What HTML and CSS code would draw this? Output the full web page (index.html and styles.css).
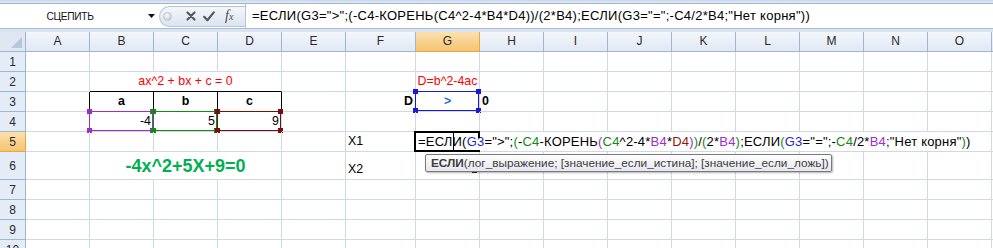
FILE: index.html
```html
<!DOCTYPE html>
<html lang="ru">
<head>
<meta charset="utf-8">
<title>Excel</title>
<link rel="stylesheet" href="styles.css">
</head>
<body>
<div class="app">
  <div class="ribbon-edge"></div>
  <div class="fbar">
    <div class="namebox">
      <span class="name">СЦЕПИТЬ</span>
      <svg class="dd" width="7" height="4" viewBox="0 0 7 4"><path d="M0 0H7L3.5 4Z" fill="#111"/></svg>
    </div>
    <div class="pill">
      <span class="knob"></span>
      <svg class="ico" width="10" height="10" viewBox="0 0 10 10"><path d="M1.5 1.5L8.5 8.5M8.5 1.5L1.5 8.5" stroke="#5a5a5a" stroke-width="2.2" stroke-linecap="round"/></svg>
      <svg class="ico" width="12" height="11" viewBox="0 0 12 11"><path d="M1.2 5.8L4.4 9.3L10.8 1.4" stroke="#5a5a5a" stroke-width="2.2" fill="none" stroke-linecap="round" stroke-linejoin="round"/></svg>
      <span class="fx">f<small>x</small></span>
    </div>
    <div class="formula">=ЕСЛИ(G3="&gt;";(-C4-КОРЕНЬ(C4^2-4*B4*D4))/(2*B4);ЕСЛИ(G3="=";-C4/2*B4;"Нет корня"))</div>
  </div>
  <div class="gap"></div>

  <div class="sheet">
    <!-- header row -->
    <div class="corner"></div>
    <div class="ch">A</div><div class="ch">B</div><div class="ch">C</div><div class="ch">D</div><div class="ch">E</div><div class="ch">F</div><div class="ch sel">G</div><div class="ch">H</div><div class="ch">I</div><div class="ch">J</div><div class="ch">K</div><div class="ch">L</div><div class="ch">M</div><div class="ch">N</div><div class="ch">O</div><div class="ch"></div>

    <!-- row 1 -->
    <div class="rh">1</div>
    <div class="c"></div><div class="c"></div><div class="c"></div><div class="c"></div><div class="c"></div><div class="c"></div><div class="c"></div><div class="c"></div><div class="c"></div><div class="c"></div><div class="c"></div><div class="c"></div><div class="c"></div><div class="c"></div><div class="c"></div><div class="c"></div>

    <!-- row 2 -->
    <div class="rh">2</div>
    <div class="c"></div>
    <div class="c span3 center red bb-black">ax^2 + bx + c = 0</div>
    <div class="c"></div><div class="c"></div>
    <div class="c center red">D=b^2-4ac</div>
    <div class="c"></div><div class="c"></div><div class="c"></div><div class="c"></div><div class="c"></div><div class="c"></div><div class="c"></div><div class="c"></div><div class="c"></div>

    <!-- row 3 -->
    <div class="rh">3</div>
    <div class="c br-black"></div>
    <div class="c center bold br-black">a</div>
    <div class="c center bold br-black">b</div>
    <div class="c center bold br-black">c</div>
    <div class="c"></div>
    <div class="c right bold">D</div>
    <div class="c center bold blue">&gt;<span class="ref ref-blue"><i class="k tl"></i><i class="k tr"></i><i class="k bl"></i><i class="k br"></i></span></div>
    <div class="c bold">0</div>
    <div class="c"></div><div class="c"></div><div class="c"></div><div class="c"></div><div class="c"></div><div class="c"></div><div class="c"></div><div class="c"></div>

    <!-- row 4 -->
    <div class="rh">4</div>
    <div class="c"></div>
    <div class="c right">-4<span class="ref ref-purple"><i class="k tl"></i><i class="k tr"></i><i class="k bl"></i><i class="k br"></i></span></div>
    <div class="c right">5<span class="ref ref-green"><i class="k tl"></i><i class="k tr"></i><i class="k bl"></i><i class="k br"></i></span></div>
    <div class="c right">9<span class="ref ref-red"><i class="k tl"></i><i class="k tr"></i><i class="k bl"></i><i class="k br"></i></span></div>
    <div class="c"></div><div class="c"></div><div class="c"></div><div class="c"></div><div class="c"></div><div class="c"></div><div class="c"></div><div class="c"></div><div class="c"></div><div class="c"></div><div class="c"></div><div class="c"></div>

    <!-- row 5 -->
    <div class="rh sel">5</div>
    <div class="c"></div><div class="c"></div><div class="c"></div><div class="c"></div><div class="c"></div>
    <div class="c">X1</div>
    <div class="c active">
      <div class="edit">=ЕСЛ<span class="caret"></span>И(<span class="rb">G3</span>="&gt;";<span class="rg">(</span>-<span class="rg">C4</span>-КОРЕНЬ<span class="rp">(</span><span class="rg">C4</span>^2-4*<span class="rp">B4</span>*<span class="rr">D4</span><span class="rp">)</span><span class="rg">)</span>/<span class="rg">(</span>2*<span class="rp">B4</span><span class="rg">)</span>;ЕСЛИ<span class="rg">(</span><span class="rb">G3</span>="=";-<span class="rg">C4</span>/2*<span class="rp">B4</span>;"Нет корня"<span class="rg">)</span>)</div>
      <span class="active-box"></span>
      <span class="active-tick"></span>
      <div class="tip"><b>ЕСЛИ</b>(лог_выражение; [значение_если_истина]; [значение_если_ложь])</div>
      <span class="dash"></span>
    </div>
    <div class="c"></div><div class="c"></div><div class="c"></div><div class="c"></div><div class="c"></div><div class="c"></div><div class="c"></div><div class="c"></div><div class="c"></div>

    <!-- row 6 -->
    <div class="rh">6</div>
    <div class="c"></div>
    <div class="c span3 center big">-4x^2+5X+9=0</div>
    <div class="c"></div>
    <div class="c">X2</div>
    <div class="c"></div><div class="c"></div><div class="c"></div><div class="c"></div><div class="c"></div><div class="c"></div><div class="c"></div><div class="c"></div><div class="c"></div><div class="c"></div>

    <!-- row 7 -->
    <div class="rh">7</div>
    <div class="c"></div><div class="c"></div><div class="c"></div><div class="c"></div><div class="c"></div><div class="c"></div><div class="c"></div><div class="c"></div><div class="c"></div><div class="c"></div><div class="c"></div><div class="c"></div><div class="c"></div><div class="c"></div><div class="c"></div><div class="c"></div>

    <!-- row 8 -->
    <div class="rh">8</div>
    <div class="c"></div><div class="c"></div><div class="c"></div><div class="c"></div><div class="c"></div><div class="c"></div><div class="c"></div><div class="c"></div><div class="c"></div><div class="c"></div><div class="c"></div><div class="c"></div><div class="c"></div><div class="c"></div><div class="c"></div><div class="c"></div>

    <!-- row 9 -->
    <div class="rh">9</div>
    <div class="c"></div><div class="c"></div><div class="c"></div><div class="c"></div><div class="c"></div><div class="c"></div><div class="c"></div><div class="c"></div><div class="c"></div><div class="c"></div><div class="c"></div><div class="c"></div><div class="c"></div><div class="c"></div><div class="c"></div><div class="c"></div>

    <!-- row 10 -->
    <div class="rh">10</div>
    <div class="c"></div><div class="c"></div><div class="c"></div><div class="c"></div><div class="c"></div><div class="c"></div><div class="c"></div><div class="c"></div><div class="c"></div><div class="c"></div><div class="c"></div><div class="c"></div><div class="c"></div><div class="c"></div><div class="c"></div><div class="c"></div>
  </div>
</div>
</body>
</html>
```

FILE: styles.css
```css
* { box-sizing: border-box; }
html, body { margin: 0; padding: 0; }
body {
  width: 993px;
  height: 248px;
  overflow: hidden;
  background: #fff;
  font-family: "Liberation Sans", Arial, sans-serif;
  color: #000;
}
.app { width: 993px; height: 248px; overflow: hidden; }

.ribbon-edge {
  height: 4px;
  background: linear-gradient(#c7d6ea, #e4ecf6);
  border-bottom: 1px solid #9fb4cf;
}

.fbar {
  display: flex;
  align-items: center;
  height: 25px;
  background: #fff;
  border-bottom: 1px solid #a9bcd5;
}
.namebox {
  width: 159px;
  height: 100%;
  display: flex;
  align-items: center;
  position: relative;
  flex: none;
}
.name {
  width: 140px;
  text-align: center;
  font-size: 10.2px;
  letter-spacing: -0.3px;
  color: #111;
}
.dd { margin-left: 8px; }

.pill {
  flex: none;
  width: 86px;
  height: 21px;
  display: flex;
  align-items: center;
  border: 1px solid #b3c4da;
  border-right: none;
  border-radius: 11px 0 0 11px;
  background: linear-gradient(#f4f7fb, #dbe4f1);
  padding-left: 3px;
}
.knob {
  width: 9px;
  height: 9px;
  border-radius: 50%;
  background: radial-gradient(circle at 40% 35%, #ffffff, #d3d6db 60%, #b9bdc4);
  border: 1px solid #c2c7cf;
}
.ico { margin-left: 14px; }
.pill .ico + .ico { margin-left: 7px; }
.fx {
  margin-left: 10px;
  font-family: "Liberation Serif", "Times New Roman", serif;
  font-style: italic;
  font-size: 14px;
  color: #4a4a4a;
  line-height: 1;
}
.fx small { font-size: 10px; }

.formula {
  flex: 1;
  height: 100%;
  border-left: 1px solid #b3c4da;
  padding-left: 6px;
  font-size: 13px;
  letter-spacing: 0.27px;
  line-height: 24px;
  white-space: nowrap;
  color: #000;
}

.gap {
  height: 3px;
  background: #dae4f1;
}

/* sheet grid */
.sheet {
  display: grid;
  grid-template-columns: 26px repeat(5, 64px) 70px repeat(9, 64px) 1fr;
  grid-template-rows: 20px 20px 20px 20px 20px 20px 28px 20px 20px 20px 20px;
  font-size: 12.4px;
}
.corner {
  background: #dfe7f2;
  border-right: 1px solid #9eb6ce;
  border-bottom: 1px solid #9eb6ce;
  position: relative;
}
.corner::after {
  content: "";
  position: absolute;
  right: 3px;
  bottom: 3px;
  width: 0;
  height: 0;
  border-left: 11px solid transparent;
  border-bottom: 11px solid #b6c7dd;
}
.ch {
  background: linear-gradient(#f3f6fb, #e1e9f4);
  border-right: 1px solid #9eb6ce;
  border-bottom: 1px solid #9eb6ce;
  text-align: center;
  line-height: 19px;
  font-size: 12px;
  color: #2a2a2a;
}
.ch.sel {
  background: linear-gradient(#fbe1b0, #f5c470);
  border-right-color: #e6a64a;
  border-bottom-color: #e6a64a;
}
.rh {
  background: #e4ecf7;
  border-right: 1px solid #9eb6ce;
  border-bottom: 1px solid #9eb6ce;
  text-align: center;
  font-size: 12px;
  color: #2a2a2a;
  display: flex;
  align-items: center;
  justify-content: center;
}
.rh.sel {
  background: linear-gradient(#fbe1b0, #f5c470);
  border-bottom-color: #e6a64a;
  border-right-color: #e6a64a;
}

.c {
  position: relative;
  border-right: 1px solid #d0d7e5;
  border-bottom: 1px solid #d0d7e5;
  padding: 0 2px 2px;
  display: flex;
  align-items: flex-end;
  line-height: 15px;
  white-space: nowrap;
}
.span3 { grid-column: span 3; }
.center { justify-content: center; }
.right { justify-content: flex-end; }
.bold { font-weight: bold; }
.red { color: #ff0000; }
.blue { color: #1f6fc5; }
.bb-black { border-bottom-color: #000; }
.br-black { border-right-color: #000; }
.big {
  font-size: 18px;
  font-weight: bold;
  color: #00b050;
  line-height: 20px;
  padding-bottom: 3px;
}

/* reference range highlights */
.ref {
  position: absolute;
  left: -1px;
  top: -1px;
  right: 0;
  bottom: 0;
  border: 1px solid;
  pointer-events: none;
}
.ref-blue { border-color: #1a1ad6; color: #1a1ad6; }
.ref-purple { border-color: #9b2fc6; color: #9b2fc6; }
.ref-green { border-color: #138a13; color: #138a13; }
.ref-red { border-color: #7a0d0d; color: #7a0d0d; }
.k {
  position: absolute;
  width: 5px;
  height: 5px;
  background: currentColor;
}
.k.tl { left: -3px; top: -3px; }
.k.tr { right: -3px; top: -3px; }
.k.bl { left: -3px; bottom: -3px; }
.k.br { right: -3px; bottom: -3px; }

/* active cell in edit mode */
.active { overflow: visible; }
.edit {
  position: absolute;
  left: 0;
  top: 0;
  width: 564px;
  height: 19px;
  background: #fff;
  padding-left: 2px;
  line-height: 19px;
  font-size: 13px;
  letter-spacing: 0.2px;
  white-space: nowrap;
  z-index: 2;
  color: #000;
}
.caret {
  display: inline-block;
  width: 1px;
  height: 17px;
  background: #000;
  vertical-align: -4px;
  margin-right: -1px;
}
.rb { color: #1f1fd0; }
.rg { color: #138a13; }
.rp { color: #9b2fc6; }
.rr { color: #8b1a0d; }
.active-box {
  position: absolute;
  left: -2px;
  top: -1px;
  width: 66px;
  height: 21px;
  border: 2px solid #000;
  border-right: none;
  z-index: 3;
}
.active-tick {
  position: absolute;
  left: 62px;
  top: -1px;
  width: 2px;
  height: 7px;
  background: #000;
  z-index: 3;
}
.tip {
  position: absolute;
  left: 9px;
  top: 22px;
  width: 407px;
  height: 18px;
  border: 1px solid #7a7a7a;
  border-radius: 2px;
  background: linear-gradient(#ffffff, #e6e7ef);
  box-shadow: 1px 1px 2px rgba(0, 0, 0, 0.3);
  padding-left: 5px;
  font-size: 11.8px;
  line-height: 16px;
  color: #3c3c3c;
  white-space: nowrap;
  z-index: 4;
}
.tip b { color: #3c3c3c; }
.dash {
  position: absolute;
  left: 56px;
  top: 40px;
  width: 5px;
  height: 1px;
  background: #222;
  z-index: 4;
}
```
